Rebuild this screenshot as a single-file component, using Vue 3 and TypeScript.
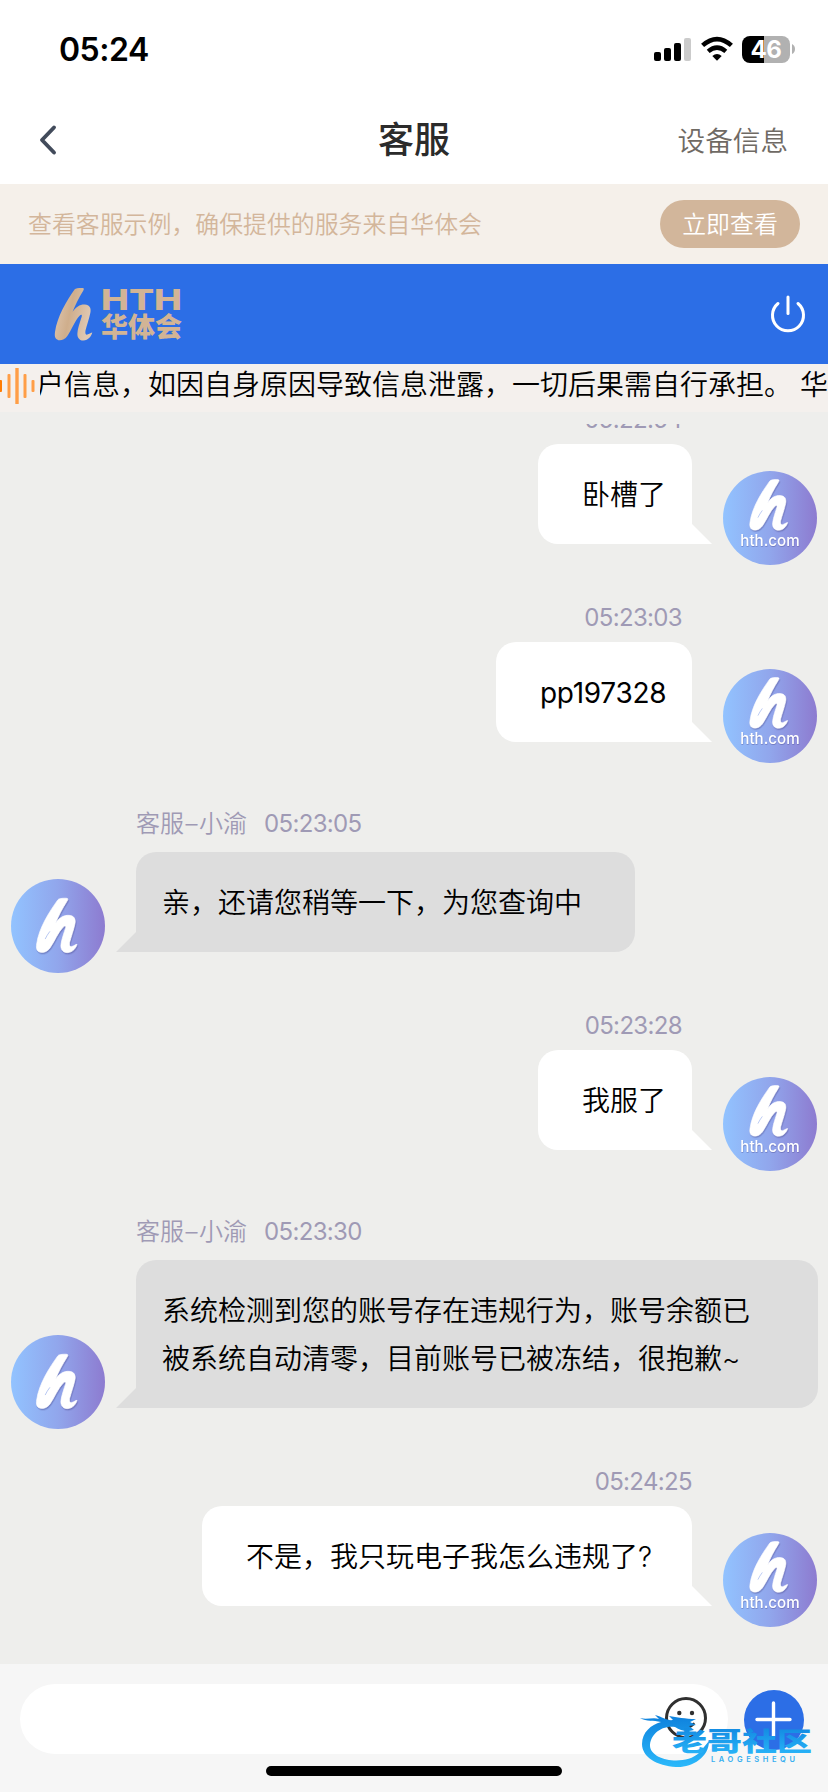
<script setup lang="ts">
interface Message {
  id: number
  from: 'me' | 'agent'
  time: string
  lines: string[]
  size: 'short' | 'id' | 'reply' | 'full' | 'question'
  flush?: boolean
}

const messages: Message[] = [
  { id: 1, from: 'me', time: '05:22:54', lines: ['卧槽了'], size: 'short' },
  { id: 2, from: 'me', time: '05:23:03', lines: ['pp197328'], size: 'id' },
  { id: 3, from: 'agent', time: '05:23:05', lines: ['亲，还请您稍等一下，为您查询中'], size: 'reply' },
  { id: 4, from: 'me', time: '05:23:28', lines: ['我服了'], size: 'short' },
  {
    id: 5,
    from: 'agent',
    time: '05:23:30',
    lines: ['系统检测到您的账号存在违规行为，账号余额已', '被系统自动清零，目前账号已被冻结，很抱歉~'],
    size: 'full',
  },
  { id: 6, from: 'me', time: '05:24:25', lines: ['不是，我只玩电子我怎么违规了?'], size: 'question', flush: true },
]

const hMark =
  'M64 4 C67 0 84 -1 91 0 C95 1 94 5 91 9 C77 31 66 52 57 74 C68 58 82 50 97 51 C112 52 118 62 115 76 C111 95 103 117 99 132 C97 143 101 147 107 144 C113 142 117 138 121 138 C119 148 108 163 92 163 C77 163 71 151 73 138 C75 122 83 101 87 88 C88 82 84 82 80 86 C64 102 53 131 40 149 C32 160 20 164 11 162 C0 159 -2 150 0 137 C7 89 36 43 64 4 Z'
</script>

<template>
  <div class="phone">
    <header class="status">
      <span class="clock">05:24</span>
      <div class="indicators">
        <svg class="signal" width="38" height="28" viewBox="0 0 38 28">
          <rect x="0" y="16" width="7" height="9" rx="2" />
          <rect x="10" y="12" width="7" height="13" rx="2" />
          <rect x="20" y="7" width="7" height="18" rx="2" />
          <rect x="30" y="2" width="7" height="23" rx="2" fill="#cbcbcb" />
        </svg>
        <svg class="wifi" width="32" height="28" viewBox="0 0 32 28">
          <path d="M1.6 9.4 Q16 -3.3 30.4 9.4" fill="none" stroke="#000" stroke-width="4.6" />
          <path d="M7.2 15.4 Q16 7.8 24.8 15.4" fill="none" stroke="#000" stroke-width="4.4" />
          <path d="M11.3 20 Q16 16 20.7 20 L16 24.8 Z" />
        </svg>
        <div class="battery"><span>46</span></div>
        <svg class="tip" width="4" height="10" viewBox="0 0 4 10"><path d="M0 0 Q3 1.5 3 5 Q3 8.500 0 10 Z" fill="#b1b1b1" /></svg>
      </div>
    </header>

    <nav class="titlebar">
      <svg class="back" width="20" height="32" viewBox="0 0 20 32">
        <path d="M16 3.500 L4 16 L16 28.500" fill="none" stroke="#424b5b" stroke-width="3.900" stroke-linecap="round" stroke-linejoin="round" />
      </svg>
      <h1>客服</h1>
      <a class="device">设备信息</a>
    </nav>

    <section class="banner">
      <span class="hint">查看客服示例，确保提供的服务来自华体会</span>
      <button class="check">立即查看</button>
    </section>

    <section class="brand">
      <svg class="logo" width="130" height="56" viewBox="0 0 130 56">
        <defs>
          <linearGradient id="gold" x1="0" x2="1" y1="0" y2="0.3">
            <stop offset="0" stop-color="#e0c9b4" />
            <stop offset="0.5" stop-color="#cfae8c" />
            <stop offset="1" stop-color="#dfc8b2" />
          </linearGradient>
        </defs>
        <path :d="hMark" transform="translate(1 2) scale(.308 .322)" fill="url(#gold)" />
        <text class="latin" x="47" y="24" textLength="81" lengthAdjust="spacingAndGlyphs">HTH</text>
        <text class="han" x="47" y="51" textLength="81" lengthAdjust="spacingAndGlyphs">华体会</text>
      </svg>
      <svg class="power" width="36" height="40" viewBox="0 0 36 40">
        <g fill="none" stroke="#fff" stroke-width="3" stroke-linecap="round">
          <path d="M8 9.500 A15.500 15.500 0 1 0 28 9.500" />
          <path d="M18 3 V19.500" />
        </g>
      </svg>
    </section>

    <section class="notice">
      <svg width="40" height="48" viewBox="0 0 40 48">
        <rect x="-1" y="16" width="3" height="12" rx="1" fill="#ff7d05" />
        <g fill="#ff9e47">
          <rect x="7.500" y="10" width="3" height="24" rx="1" />
          <rect x="15.300" y="4" width="3.400" height="36" />
          <rect x="23.500" y="10" width="3" height="24" rx="1" />
          <rect x="31.500" y="16" width="3" height="12" rx="1" />
        </g>
      </svg>
      <div class="ticker"><span>户信息，如因自身原因导致信息泄露，一切后果需自行承担。</span><span class="next">华</span></div>
    </section>

    <main class="chat">
      <article v-for="m in messages" :key="m.id" class="message" :class="[m.from, { flush: m.flush }]">
        <div class="meta">
          <span v-if="m.from === 'agent'" class="name">客服<i>–</i>小渝</span>
          <time>{{ m.time }}</time>
        </div>
        <div class="row">
          <svg class="avatar" width="94" height="94" viewBox="0 0 282 282">
            <defs>
              <linearGradient :id="'sky' + m.id" x1="0" x2="1" y1="0" y2="0">
                <stop offset="0" stop-color="#92c3ff" />
                <stop offset="0.5" stop-color="#91a6ec" />
                <stop offset="1" stop-color="#8d7bd0" />
              </linearGradient>
            </defs>
            <circle cx="141" cy="141" r="141" :fill="`url(#sky${m.id})`" />
            <g :transform="m.from === 'me' ? 'translate(81 26) scale(.932)' : 'translate(77 58)'">
              <path class="mark" :d="hMark" />
              <path d="M39 100 C34 107 29 114 26 121" fill="none" stroke="#b9c9f3" stroke-width="3" stroke-linecap="round" />
            </g>
            <text v-if="m.from === 'me'" class="domain" x="141" y="224" text-anchor="middle" textLength="178" lengthAdjust="spacingAndGlyphs">hth.com</text>
          </svg>
          <div class="bubble" :class="m.size">
            <p v-for="line in m.lines" :key="line">{{ line }}</p>
          </div>
        </div>
      </article>
    </main>

    <footer class="composer">
      <div class="controls">
        <div class="field">
          <svg width="44" height="44" viewBox="0 0 44 44">
            <circle cx="22" cy="22" r="19.500" fill="none" stroke="#303030" stroke-width="3" />
            <circle cx="15.300" cy="17" r="2.200" fill="#303030" />
            <circle cx="28" cy="17" r="2.200" fill="#303030" />
            <path d="M14.500 28 Q22 35 29.500 28" fill="none" stroke="#303030" stroke-width="2.600" stroke-linecap="round" />
          </svg>
        </div>
        <svg class="plus" width="60" height="60" viewBox="0 0 60 60">
          <circle cx="30" cy="30" r="30" fill="#2c6ee6" />
          <path d="M13 29.500 H46 M29.500 13 V46" stroke="#fff" stroke-width="3.400" stroke-linecap="round" />
        </svg>
      </div>
      <div class="home"></div>
    </footer>

    <svg class="stamp" width="180" height="66" viewBox="0 0 180 66">
      <defs>
        <linearGradient id="wave" x1="0" x2="0" y1="0" y2="1">
          <stop offset="0" stop-color="#0e80dc" />
          <stop offset="1" stop-color="#2bb9fb" />
        </linearGradient>
      </defs>
      <path fill="url(#wave)" d="M1 10 C8 12 14 9 20 11 L16 7 C24 9 28 13 34 12 L30 8 C38 9 46 11 57 11 L51 14 L57 17 L50 18 L55 22 C48 24 42 23 36 19 C22 17 11 27 11 38 C12 53 46 58 60 45 L70 33 C70 50 52 60 37 59 C18 58 3 49 3 36 C3 24 12 17 22 14 C14 12 8 14 1 10 Z" />
      <text class="stamp-han" x="33" y="43" textLength="140" lengthAdjust="spacingAndGlyphs" fill="url(#wave)">老哥社区</text>
      <text class="stamp-latin" x="72" y="54" textLength="84">LAOGESHEQU</text>
    </svg>
  </div>
</template>

<style>
body {
  margin: 0;
}
</style>

<style scoped>
.phone {
  position: relative;
  display: flex;
  flex-direction: column;
  width: 828px;
  height: 1792px;
  overflow: hidden;
  background: #fff;
  font-family: Inter, 'Noto Sans CJK SC', sans-serif;
  font-weight: 350;
}

.status {
  display: flex;
  flex: none;
  justify-content: space-between;
  height: 96px;
  box-sizing: border-box;
  padding: 29px 34px 0 59px;
}
.clock {
  font-size: 32px;
  line-height: 41px;
  font-weight: 600;
  letter-spacing: -0.5px;
}
.indicators {
  display: flex;
  align-items: flex-start;
  padding-top: 7px;
}
.signal {
  width: 38px;
  margin-right: 9px;
}
.wifi {
  margin-right: 9px;
}
.battery {
  width: 48px;
  height: 27px;
  border-radius: 8px;
  background: linear-gradient(90deg, #000 22px, #b1b1b1 22px);
  color: #fff;
  font-size: 24px;
  line-height: 27px;
  font-weight: 700;
  letter-spacing: -0.5px;
  text-align: center;
}
.tip {
  margin: 8px -2px 0 2px;
}

.titlebar {
  display: grid;
  flex: none;
  grid-template-columns: 1fr auto 1fr;
  align-items: center;
  height: 88px;
  padding: 0 40px 0 38px;
}
.titlebar h1 {
  margin: 0 0 0 2px;
  color: #2b2b2b;
  font-size: 36px;
  line-height: 50px;
  font-weight: 500;
}
.device {
  justify-self: end;
  margin-top: 2px;
  color: #6f6a64;
  font-size: 27.600px;
  line-height: 40px;
}

.banner {
  display: flex;
  flex: none;
  align-items: center;
  justify-content: space-between;
  height: 80px;
  padding: 0 28px;
  background: #f5f0ea;
  color: #d3b69b;
  font-size: 23.900px;
  line-height: 34px;
}
.hint {
  margin-top: 2px;
}
.check {
  width: 140px;
  height: 48px;
  padding: 2px 0 0;
  border: 0;
  border-radius: 24px;
  background: #d2b69b;
  color: #fff;
  font: inherit;
}

.brand {
  display: flex;
  flex: none;
  align-items: center;
  justify-content: space-between;
  height: 100px;
  padding: 0 22px 0 54px;
  background: #2c6ee6;
}
.logo {
  overflow: visible;
}
.latin {
  fill: #d2b495;
  font: 800 28px Inter, sans-serif;
}
.han {
  fill: #d2b495;
  font: 900 27px 'Noto Sans CJK SC', sans-serif;
}

.notice {
  display: flex;
  flex: none;
  height: 48px;
  background: #f4f0ed;
}
.notice svg {
  flex: none;
}
.ticker {
  flex: 1;
  overflow: hidden;
  color: #000;
  font-size: 28px;
  line-height: 42px;
  text-indent: -4px;
  white-space: nowrap;
}
.next {
  margin-left: 8px;
}

.chat {
  display: flex;
  flex: 1;
  flex-direction: column;
  justify-content: flex-end;
  min-height: 0;
  box-sizing: border-box;
  overflow: hidden;
  padding-bottom: 58px;
  border-top: 12px solid #eeeeec;
  background: #eeeeec;
}
.message {
  flex: none;
}
.meta {
  display: flex;
  color: #9f9ab5;
  font-size: 24px;
  line-height: 34px;
}
.meta time {
  font-weight: 400;
  letter-spacing: -0.65px;
}
.me .meta {
  justify-content: flex-end;
  margin: 57px 146px 7px 0;
}
.flush.me .meta {
  margin-right: 136px;
}
.agent .meta {
  gap: 17px;
  margin: 65px 0 11px 136px;
}
.name i {
  display: inline-block;
  width: 15px;
  font-style: normal;
  text-align: center;
}
.row {
  display: flex;
  align-items: flex-end;
  gap: 31px;
  padding: 0 11px;
}
.me .row {
  flex-direction: row-reverse;
}
.agent .row {
  padding-right: 0;
}
.avatar {
  flex: none;
  margin-bottom: -21px;
}
.mark {
  fill: #fff;
  stroke: #fff;
  stroke-width: 2px;
  filter: drop-shadow(2px 4px 2px rgba(70, 70, 140, 0.45));
}
.domain {
  fill: #fff;
  font: 500 46px Inter, sans-serif;
  filter: drop-shadow(1px 3px 2px rgba(70, 70, 140, 0.4));
}
.bubble {
  position: relative;
  box-sizing: border-box;
  padding: 27px 26px 25px;
  border-radius: 20px;
  color: #000;
  font-size: 28px;
  line-height: 48px;
  white-space: nowrap;
}
.bubble p {
  margin: 0;
}
.bubble::after {
  content: '';
  position: absolute;
  bottom: 0;
  width: 20px;
  height: 20px;
}
.me .bubble {
  padding-left: 44px;
  border-bottom-right-radius: 0;
  background: #fff;
}
.me .bubble::after {
  left: 100%;
  background: #fff;
  clip-path: polygon(0 0, 100% 100%, 0 100%);
}
.agent .bubble {
  border-bottom-left-radius: 0;
  background: #ddd;
}
.agent .bubble::after {
  right: 100%;
  background: #ddd;
  clip-path: polygon(100% 0, 100% 100%, 0 100%);
}
.short {
  width: 154px;
}
.id {
  width: 196px;
  font-weight: 400;
  letter-spacing: -0.3px;
}
.reply {
  width: 499px;
}
.full {
  width: 682px;
}
.question {
  width: 490px;
}

.composer {
  display: flex;
  flex: none;
  flex-direction: column;
  height: 128px;
  box-sizing: border-box;
  padding-top: 20px;
  background: #f6f6f6;
}
.controls {
  display: flex;
  align-items: center;
  gap: 16px;
  padding-left: 20px;
}
.field {
  display: flex;
  align-items: center;
  justify-content: flex-end;
  width: 708px;
  height: 70px;
  box-sizing: border-box;
  padding: 0 20px 2px 0;
  border-radius: 35px;
  background: #fff;
}
.plus {
  margin-top: 2px;
}
.home {
  align-self: center;
  width: 296px;
  height: 10px;
  margin-top: 12px;
  border-radius: 5px;
  background: #000;
}

.stamp {
  position: absolute;
  left: 639px;
  top: 1708px;
}
.stamp-han {
  font: 900 26px 'Noto Sans CJK SC', sans-serif;
}
.stamp-latin {
  fill: #35aef0;
  font: 600 7.5px Inter, sans-serif;
}
</style>
